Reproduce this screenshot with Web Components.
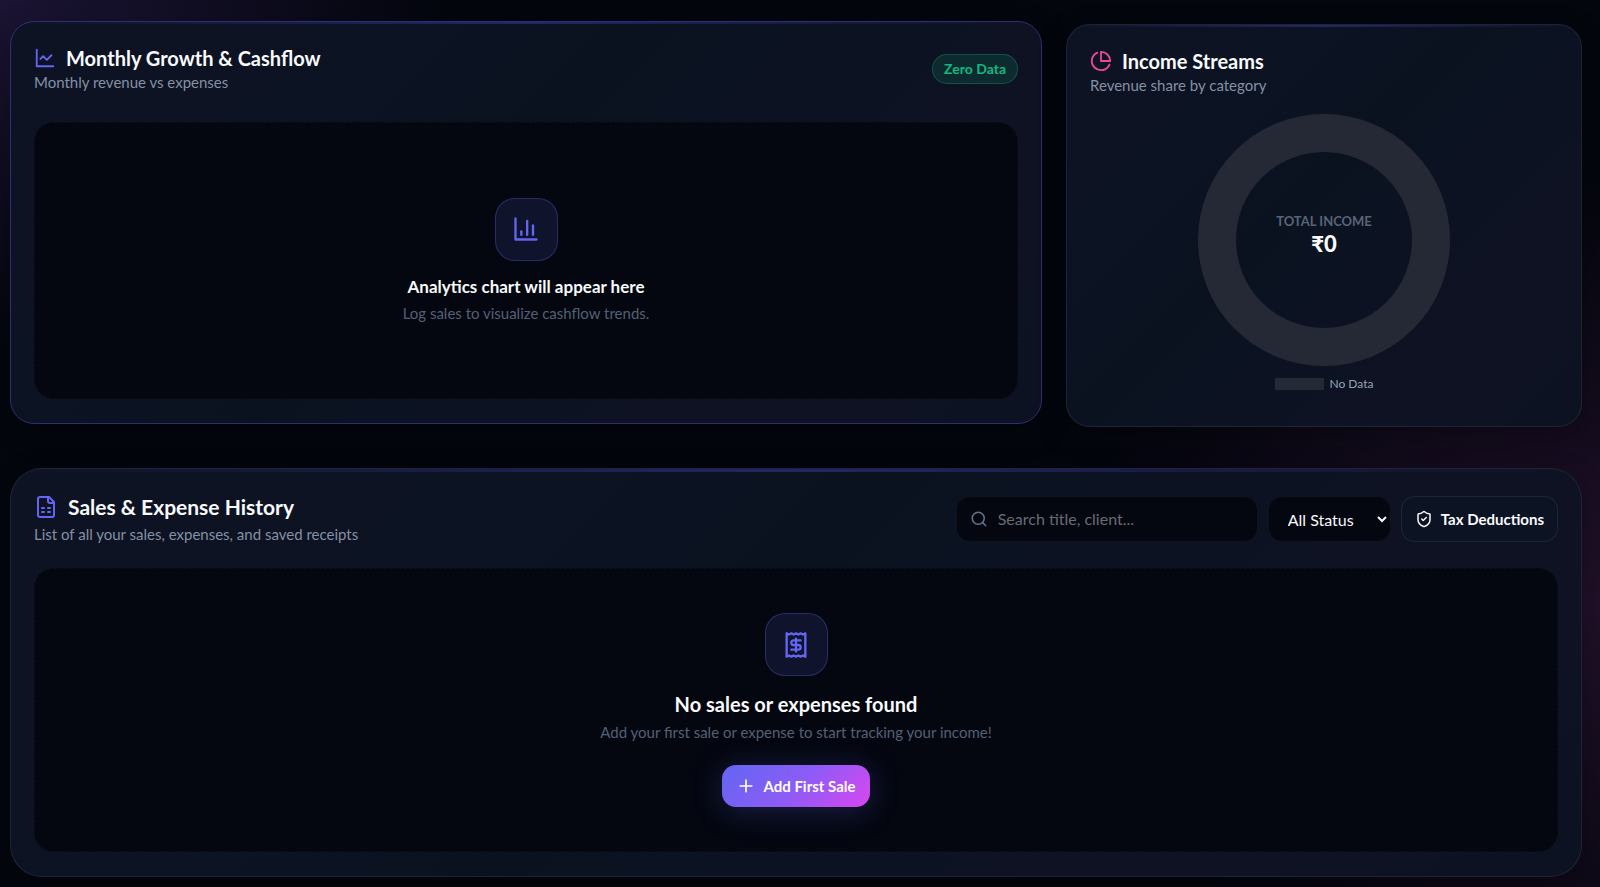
<!DOCTYPE html>
<html lang="en">
<head>
  <meta charset="UTF-8">
  <meta name="viewport" content="width=device-width, initial-scale=1.0">
  <title>Income Dashboard</title>
  <style>
    :root {
      --text: #f8fafc;
      --text-soft: #8490a4;
      --text-muted: #536075;
      --accent: #6366f1;
      --pink: #ec4899;
      --green: #10b981;
      --surface: #040710;
      --line: rgb(255 255 255 / 0.08);
    }

    body {
      margin: 0;
      min-height: 100vh;
      font-family: Lato, "Noto Sans", sans-serif;
      color: var(--text);
      background:
        radial-gradient(ellipse 440px 340px at 0 0, rgb(76 50 130 / 0.32), transparent),
        radial-gradient(ellipse 520px 420px at 100% 68%, rgb(100 40 104 / 0.3), transparent),
        #04060e;
    }
  </style>
</head>
<body>
  <income-dashboard></income-dashboard>

  <script>
    /* === ICONS === */

    const ICONS = {
      line: '<path d="M3 3v18h18"/><path d="m19 9-5 5-4-4-3 3"/>',
      bars: '<path d="M3 3v18h18"/><path d="M18 17V9"/><path d="M13 17V5"/><path d="M8 17v-3"/>',
      pie: '<path d="M21.21 15.89A10 10 0 1 1 8 2.83"/><path d="M22 12A10 10 0 0 0 12 2v10z"/>',
      sheet: '<path d="M15 2H6a2 2 0 0 0-2 2v16a2 2 0 0 0 2 2h12a2 2 0 0 0 2-2V7Z"/><path d="M14 2v4a2 2 0 0 0 2 2h4"/><path d="M8 13h2M14 13h2M8 17h2M14 17h2"/>',
      receipt: '<path d="M4 2v20l2-1 2 1 2-1 2 1 2-1 2 1 2-1 2 1V2l-2 1-2-1-2 1-2-1-2 1-2-1-2 1Z"/><path d="M16 8h-6a2 2 0 1 0 0 4h4a2 2 0 1 1 0 4H8"/><path d="M12 17.5v-11"/>',
      shield: '<path d="M20 13c0 5-3.5 7.5-7.66 8.95a1 1 0 0 1-.67-.01C7.5 20.5 4 18 4 13V6a1 1 0 0 1 1-1c2 0 4.5-1.2 6.24-2.72a1.17 1.17 0 0 1 1.52 0C14.51 3.81 17 5 19 5a1 1 0 0 1 1 1z"/><path d="m9 12 2 2 4-4"/>',
      search: '<circle cx="11" cy="11" r="8"/><path d="m21 21-4.3-4.3"/>',
      plus: '<path d="M5 12h14M12 5v14"/>'
    };

    class UiIcon extends HTMLElement {
      constructor() {
        super();
        this.attachShadow({ mode: "open" });
      }

      connectedCallback() {
        const size = this.getAttribute("size") || "22";
        this.shadowRoot.innerHTML = `
          <style>
            :host { display: block; flex: none; }
            svg { display: block; }
          </style>
          <svg width="${size}" height="${size}" viewBox="0 0 24 24" fill="none" stroke="currentColor"
            stroke-width="2" stroke-linecap="round" stroke-linejoin="round" aria-hidden="true">
            ${ICONS[this.getAttribute("name")]}
          </svg>
        `;
      }
    }

    /* === CARD === */

    class DashCard extends HTMLElement {
      constructor() {
        super();
        this.attachShadow({ mode: "open" });
        this.shadowRoot.innerHTML = `
          <style>
            :host {
              position: relative;
              display: flex;
              flex-direction: column;
              gap: 29px;
              box-sizing: border-box;
              padding: 23px 23px 24px;
              border: 1px solid var(--line);
              border-radius: 24px;
              overflow: hidden;
              background: linear-gradient(135deg, #0e1324, #0a1220 45%, #0f1223 80%, #0c1222);
              box-shadow: 0 10px 30px rgb(0 0 0 / 0.3);
            }

            /* glowing line along the top edge */
            :host::before {
              content: "";
              position: absolute;
              inset: 0 0 auto;
              height: 2px;
              background: linear-gradient(90deg, transparent, rgb(79 70 229 / 0.36), transparent);
            }

            :host([active]) {
              border-color: #2e2e72;
              transform: translateY(-3px);
            }

            :host([large]) {
              gap: 23px;
              padding-top: 24px;
              border-radius: 32px;
            }

            :host([large])::before { height: 3px; }

            :host([compact]) {
              gap: 18px;
            }

            header {
              display: flex;
              flex-wrap: wrap;
              align-items: center;
              justify-content: space-between;
              gap: 16px;
            }

            .title {
              display: flex;
              align-items: center;
              gap: 10px;
            }

            .title ui-icon { color: var(--card-accent, var(--accent)); }

            h2 {
              margin: 0;
              font-size: 20px;
              line-height: 26px;
              font-weight: 700;
            }

            p {
              margin: 0;
              font-size: 15px;
              line-height: 22px;
              color: var(--text-soft);
            }

            :host([large]) h2 {
              font-size: 21px;
              line-height: 28px;
            }

            :host([large]) p { margin-top: 2px; }
          </style>
          <header>
            <div>
              <div class="title">
                <ui-icon name="${this.getAttribute("icon")}" size="${this.hasAttribute("large") ? 24 : 22}"></ui-icon>
                <h2><slot name="title"></slot></h2>
              </div>
              <p><slot name="subtitle"></slot></p>
            </div>
            <slot name="actions"></slot>
          </header>
          <slot></slot>
        `;
      }
    }

    class StatusBadge extends HTMLElement {
      constructor() {
        super();
        this.attachShadow({ mode: "open" });
        this.shadowRoot.innerHTML = `
          <style>
            :host {
              display: block;
              padding: 4px 11px;
              border: 1px solid rgb(16 185 129 / 0.3);
              border-radius: 999px;
              font-size: 14px;
              line-height: 20px;
              font-weight: 700;
              color: var(--green);
              background: rgb(16 185 129 / 0.15);
            }
          </style>
          <slot></slot>
        `;
      }
    }

    /* === EMPTY STATE === */

    class EmptyState extends HTMLElement {
      constructor() {
        super();
        this.attachShadow({ mode: "open" });
        this.shadowRoot.innerHTML = `
          <style>
            :host {
              display: flex;
              flex-direction: column;
              align-items: center;
              justify-content: center;
              box-sizing: border-box;
              min-height: 277px;
              padding: 44px 24px;
              border: 1px dashed rgb(255 255 255 / 0.03);
              border-radius: 20px;
              text-align: center;
              background: var(--surface);
            }

            .tile {
              display: grid;
              place-items: center;
              box-sizing: border-box;
              width: 63px;
              height: 63px;
              margin-bottom: 14px;
              border: 1px solid rgb(99 102 241 / 0.3);
              border-radius: 20px;
              color: var(--accent);
              background: rgb(99 102 241 / 0.13);
            }

            h3 {
              margin: 0;
              font-size: 17px;
              line-height: 24px;
              font-weight: 700;
            }

            :host([large]) h3 {
              font-size: 20px;
              line-height: 28px;
            }

            p {
              margin: 3px 0 0;
              font-size: 15px;
              line-height: 22px;
              color: var(--text-muted);
            }

            ::slotted(primary-button) { margin-top: 22px; }
          </style>
          <div class="tile"><ui-icon name="${this.getAttribute("icon")}" size="28"></ui-icon></div>
          <h3><slot name="title"></slot></h3>
          <p><slot name="text"></slot></p>
          <slot></slot>
        `;
      }
    }

    /* === CONTROLS === */

    class PrimaryButton extends HTMLElement {
      constructor() {
        super();
        this.attachShadow({ mode: "open" });
        this.shadowRoot.innerHTML = `
          <style>
            :host { display: block; }

            button {
              display: flex;
              align-items: center;
              gap: 7px;
              height: 42px;
              padding: 0 14px;
              border: 0;
              border-radius: 14px;
              font: 700 15px/20px Lato, "Noto Sans", sans-serif;
              color: #fff;
              background: linear-gradient(135deg, #6366f1, #8b5cf6 50%, #d946ef);
              box-shadow: 0 4px 30px rgb(99 102 241 / 0.25);
              cursor: pointer;
            }

            button:hover { filter: brightness(1.1); }
          </style>
          <button type="button"><ui-icon name="plus" size="20"></ui-icon><slot></slot></button>
        `;
      }
    }

    class HistoryToolbar extends HTMLElement {
      constructor() {
        super();
        this.attachShadow({ mode: "open" });
        this.shadowRoot.innerHTML = `
          <style>
            :host {
              display: flex;
              flex-wrap: wrap;
              align-items: center;
              gap: 10px;
            }

            label, select, button {
              box-sizing: border-box;
              height: 46px;
              border: 1px solid var(--line);
              border-radius: 14px;
              color: var(--text);
              background-color: var(--surface);
            }

            .search {
              display: flex;
              align-items: center;
              gap: 10px;
              width: 302px;
              padding: 0 13px;
              border-color: rgb(255 255 255 / 0.05);
            }

            .search ui-icon { color: #64748b; }

            input {
              flex: 1;
              min-width: 0;
              padding: 0;
              border: 0;
              outline: 0;
              font: 400 16px/24px Lato, "Noto Sans", sans-serif;
              color: var(--text);
              background: transparent;
            }

            input::placeholder { color: #696b73; }

            select {
              padding: 0 0 0 15px;
              width: 123px;
              border-color: rgb(255 255 255 / 0.05);
              font: 400 16px/24px Lato, "Noto Sans", sans-serif;
            }

            button {
              display: flex;
              align-items: center;
              gap: 8px;
              padding: 0 13px;
              font: 700 15px/20px Lato, "Noto Sans", sans-serif;
              background-color: #0c1323;
              cursor: pointer;
            }
          </style>
          <label class="search">
            <ui-icon name="search" size="18"></ui-icon>
            <input type="search" placeholder="Search title, client..." aria-label="Search">
          </label>
          <select aria-label="Status">
            <option>All Status</option>
            <option>Paid</option>
            <option>Pending</option>
          </select>
          <button type="button"><ui-icon name="shield" size="18"></ui-icon>Tax Deductions</button>
        `;
      }
    }

    /* === DONUT === */

    class DonutChart extends HTMLElement {
      constructor() {
        super();
        this.attachShadow({ mode: "open" });
        this.shadowRoot.innerHTML = `
          <style>
            :host {
              display: flex;
              flex-direction: column;
              align-items: center;
              gap: 10px;
            }

            .chart {
              position: relative;
              width: 252px;
            }

            svg { display: block; }

            /* totals lie over the hole of the ring */
            .total {
              position: absolute;
              inset: 0 0 10px;
              display: flex;
              flex-direction: column;
              align-items: center;
              justify-content: center;
            }

            .label {
              font-size: 13px;
              line-height: 18px;
              font-weight: 700;
              text-transform: uppercase;
              color: #596478;
            }

            .value {
              font-size: 22px;
              line-height: 28px;
              font-weight: 900;
            }

            .legend {
              display: flex;
              align-items: center;
              gap: 6px;
              font-size: 12px;
              line-height: 16px;
              color: #94a3b8;
            }

            .swatch {
              width: 49px;
              height: 12px;
              background: #252936;
            }
          </style>
          <div class="chart">
            <svg viewBox="0 0 252 252" aria-hidden="true">
              <circle cx="126" cy="126" r="107" fill="none" stroke="#252936" stroke-width="38"/>
            </svg>
            <div class="total">
              <span class="label"><slot name="label"></slot></span>
              <span class="value"><slot name="value"></slot></span>
            </div>
          </div>
          <div class="legend"><span class="swatch"></span><slot name="legend"></slot></div>
        `;
      }
    }

    /* === PAGE === */

    class IncomeDashboard extends HTMLElement {
      constructor() {
        super();
        this.attachShadow({ mode: "open" });
        this.shadowRoot.innerHTML = `
          <style>
            :host { display: block; }

            main {
              display: grid;
              gap: 41px;
              padding: 24px 18px 10px 10px;
            }

            .row {
              display: grid;
              grid-template-columns: 2fr 1fr;
              gap: 24px;
            }

            .income { --card-accent: var(--pink); }

            .history-empty { min-height: 283px; }

            @media (max-width: 900px) {
              .row { grid-template-columns: 1fr; }
            }
          </style>
          <main>
            <div class="row">
              <dash-card icon="line" active>
                <span slot="title">Monthly Growth &amp; Cashflow</span>
                <span slot="subtitle">Monthly revenue vs expenses</span>
                <status-badge slot="actions">Zero Data</status-badge>
                <empty-state icon="bars">
                  <span slot="title">Analytics chart will appear here</span>
                  <span slot="text">Log sales to visualize cashflow trends.</span>
                </empty-state>
              </dash-card>
              <dash-card class="income" icon="pie" compact>
                <span slot="title">Income Streams</span>
                <span slot="subtitle">Revenue share by category</span>
                <donut-chart>
                  <span slot="label">TOTAL INCOME</span>
                  <span slot="value">₹0</span>
                  <span slot="legend">No Data</span>
                </donut-chart>
              </dash-card>
            </div>
            <dash-card icon="sheet" large>
              <span slot="title">Sales &amp; Expense History</span>
              <span slot="subtitle">List of all your sales, expenses, and saved receipts</span>
              <history-toolbar slot="actions"></history-toolbar>
              <empty-state class="history-empty" icon="receipt" large>
                <span slot="title">No sales or expenses found</span>
                <span slot="text">Add your first sale or expense to start tracking your income!</span>
                <primary-button>Add First Sale</primary-button>
              </empty-state>
            </dash-card>
          </main>
        `;
      }
    }

    customElements.define("ui-icon", UiIcon);
    customElements.define("status-badge", StatusBadge);
    customElements.define("primary-button", PrimaryButton);
    customElements.define("history-toolbar", HistoryToolbar);
    customElements.define("donut-chart", DonutChart);
    customElements.define("empty-state", EmptyState);
    customElements.define("dash-card", DashCard);
    customElements.define("income-dashboard", IncomeDashboard);
  </script>
</body>
</html>
